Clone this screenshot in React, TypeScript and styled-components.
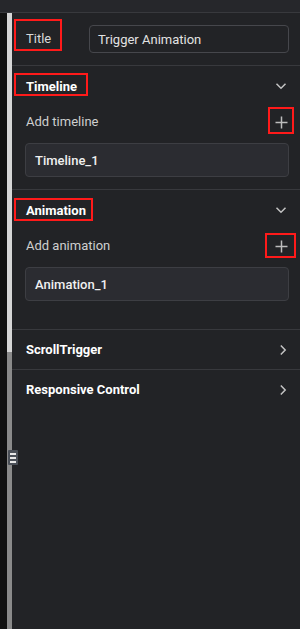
import React from 'react'
import styled, { createGlobalStyle } from 'styled-components'

const GlobalStyle = createGlobalStyle`
	html, body {
		margin: 0;
		padding: 0;
		background: #222326;
	}
	body {
		font-family: Roboto, 'Liberation Sans', sans-serif;
	}
`

interface MarkBox {
	$l: number
	$t: number
	$w: number
	$h: number
}

const Page = styled.div`
	display: flex;
	flex-direction: column;
	width: 300px;
	height: 629px;
	background: #222326;
	overflow: hidden;
`

const TopBar = styled.div`
	height: 12px;
	flex: none;
	background: #26272b;
	border-bottom: 1px solid #38393d;
`

const Body = styled.div`
	position: relative;
	display: flex;
	flex: 1;
	min-height: 0;
`

const Gutter = styled.div`
	width: 7px;
	flex: none;
	background: #121212;
`

const Track = styled.div`
	display: flex;
	flex-direction: column;
	width: 5px;
	flex: none;
	background: #8a8a8a;
`

const Thumb = styled.div`
	height: 339px;
	background: #d6d6d6;
`

const Grip = styled.div`
	position: absolute;
	left: 8px;
	top: 437px;
	width: 10px;
	height: 15px;
	display: flex;
	align-items: center;
	justify-content: center;
	background: #4b5058;
	border-radius: 1px;
`

const Panel = styled.div`
	flex: 1;
	display: flex;
	flex-direction: column;
	background: #222326;
`

const TitleRow = styled.div`
	display: flex;
	align-items: center;
	padding: 12px 11px 12px 14px;
	border-bottom: 1px solid #38393d;
`

const Label = styled.span`
	width: 63px;
	flex: none;
	font-size: 13px;
	line-height: 20px;
	color: #d9d9d9;
`

const Marked = styled.span<MarkBox>`
	position: relative;
	display: inline-block;

	&::after {
		content: '';
		position: absolute;
		left: ${({ $l }) => $l}px;
		top: ${({ $t }) => $t}px;
		width: ${({ $w }) => $w}px;
		height: ${({ $h }) => $h}px;
		box-sizing: border-box;
		border: 2px solid #ff1a1a;
		pointer-events: none;
	}
`

const TextInput = styled.div`
	flex: 1;
	height: 28px;
	box-sizing: border-box;
	display: flex;
	align-items: center;
	padding: 0 8px;
	border: 1px solid #46474c;
	border-radius: 4px;
	font-size: 13px;
	color: #e2e2e2;
`

const Section = styled.div<{ $bottom: number }>`
	display: flex;
	flex-direction: column;
	padding: 10px 11px ${({ $bottom }) => $bottom}px 13px;
	border-bottom: 1px solid #38393d;
`

const Header = styled.div`
	display: flex;
	align-items: center;
	justify-content: space-between;
	height: 20px;
	padding-left: 1px;
`

const HeaderText = styled.span`
	font-size: 13px;
	font-weight: 700;
	line-height: 20px;
	color: #ffffff;
`

const AddRow = styled.div`
	display: flex;
	align-items: center;
	justify-content: space-between;
	height: 26px;
	margin-top: 13px;
	padding-left: 1px;
`

const AddText = styled.span`
	font-size: 13px;
	line-height: 20px;
	color: #cfcfcf;
`

const IconSlot = styled.span`
	display: flex;
	align-items: center;
	justify-content: center;
	width: 14px;
	height: 14px;
	margin-right: 1px;
`

const ItemBox = styled.div`
	height: 34px;
	margin-top: 8px;
	box-sizing: border-box;
	display: flex;
	align-items: center;
	padding: 0 9px;
	background: #2b2c31;
	border: 1px solid #3d3e43;
	border-radius: 4px;
	font-size: 13px;
	font-weight: 500;
	color: #f0f0f0;
`

const LinkRow = styled.div`
	display: flex;
	align-items: center;
	justify-content: space-between;
	height: 39px;
	padding: 0 13px 0 14px;
	border-bottom: 1px solid #38393d;

	&:last-child {
		border-bottom: none;
	}
`

const ChevronDown = () => (
	<svg width="12" height="8" viewBox="0 0 12 8" fill="none">
		<path d="M1.5 1.8 6 6.2 10.5 1.8" stroke="#c4c4c4" strokeWidth="1.5" />
	</svg>
)

const ChevronRight = () => (
	<svg width="8" height="12" viewBox="0 0 8 12" fill="none">
		<path d="M1.8 1.5 6.2 6 1.8 10.5" stroke="#c4c4c4" strokeWidth="1.5" />
	</svg>
)

const Plus = () => (
	<svg width="13" height="13" viewBox="0 0 13 13" fill="none">
		<path d="M6.5 0.5v12M0.5 6.5h12" stroke="#bdbdbd" strokeWidth="1.5" />
	</svg>
)

const GripIcon = () => (
	<svg width="6" height="10" viewBox="0 0 6 10">
		<rect x="0" y="0" width="6" height="2" fill="#e8e8e8" />
		<rect x="0" y="4" width="6" height="2" fill="#e8e8e8" />
		<rect x="0" y="8" width="6" height="2" fill="#e8e8e8" />
	</svg>
)

interface SectionProps {
	title: string
	addLabel: string
	item: string
	bottom: number
	titleMark: MarkBox
	plusMark: MarkBox
}

const CollapseSection: React.FC<SectionProps> = ({ title, addLabel, item, bottom, titleMark, plusMark }) => (
	<Section $bottom={bottom}>
		<Header>
			<Marked {...titleMark}>
				<HeaderText>{title}</HeaderText>
			</Marked>
			<IconSlot>
				<ChevronDown />
			</IconSlot>
		</Header>
		<AddRow>
			<AddText>{addLabel}</AddText>
			<Marked {...plusMark}>
				<IconSlot>
					<Plus />
				</IconSlot>
			</Marked>
		</AddRow>
		<ItemBox>{item}</ItemBox>
	</Section>
)

const App: React.FC = () => {
	return (
		<>
			<GlobalStyle />
			<Page>
				<TopBar />
				<Body>
					<Gutter />
					<Track>
						<Thumb />
					</Track>
					<Grip>
						<GripIcon />
					</Grip>
					<Panel>
						<TitleRow>
							<Label>
								<Marked $l={-12} $t={-10} $w={48} $h={32}>
									Title
								</Marked>
							</Label>
							<TextInput>Trigger Animation</TextInput>
						</TitleRow>
						<CollapseSection
							title="Timeline"
							addLabel="Add timeline"
							item="Timeline_1"
							bottom={12}
							titleMark={{ $l: -12, $t: -3, $w: 74, $h: 23 }}
							plusMark={{ $l: -6, $t: -8, $w: 26, $h: 27 }}
						/>
						<CollapseSection
							title="Animation"
							addLabel="Add animation"
							item="Animation_1"
							bottom={28}
							titleMark={{ $l: -12, $t: -2, $w: 79, $h: 23 }}
							plusMark={{ $l: -9, $t: -6, $w: 31, $h: 25 }}
						/>
						<LinkRow>
							<HeaderText>ScrollTrigger</HeaderText>
							<ChevronRight />
						</LinkRow>
						<LinkRow>
							<HeaderText>Responsive Control</HeaderText>
							<ChevronRight />
						</LinkRow>
					</Panel>
				</Body>
			</Page>
		</>
	)
}

export default App
